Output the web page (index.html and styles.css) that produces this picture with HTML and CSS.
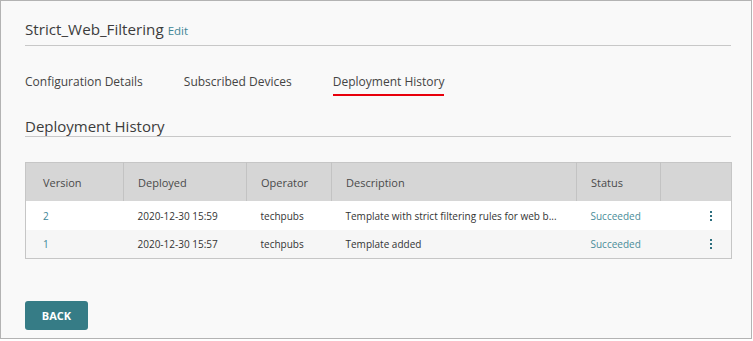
FILE: index.html
```html
<!DOCTYPE html>
<html lang="en">
<head>
    <meta charset="UTF-8">
    <meta name="viewport" content="width=device-width, initial-scale=1.0">
    <title>Strict_Web_Filtering</title>
    <link rel="stylesheet" href="styles.css">
</head>
<body>
    <div class="frame">
        <div class="title-bar">
            <span class="title">Strict_Web_Filtering</span>
            <a class="edit" href="#">Edit</a>
        </div>

        <div class="tabs">
            <div class="tab">Configuration Details</div>
            <div class="tab">Subscribed Devices</div>
            <div class="tab active">Deployment History</div>
        </div>

        <h2 class="section-title">Deployment History</h2>

        <table class="history">
            <colgroup>
                <col style="width: 98px">
                <col style="width: 123px">
                <col style="width: 85px">
                <col style="width: 245px">
                <col style="width: 84px">
                <col>
            </colgroup>
            <thead>
                <tr>
                    <th>Version</th>
                    <th>Deployed</th>
                    <th>Operator</th>
                    <th>Description</th>
                    <th>Status</th>
                    <th></th>
                </tr>
            </thead>
            <tbody>
                <tr>
                    <td><a class="link" href="#">2</a></td>
                    <td>2020-12-30 15:59</td>
                    <td>techpubs</td>
                    <td class="desc">Template with strict filtering rules for web b...</td>
                    <td class="status">Succeeded</td>
                    <td class="menu"><span class="kebab"><i></i><i></i><i></i></span></td>
                </tr>
                <tr>
                    <td><a class="link" href="#">1</a></td>
                    <td>2020-12-30 15:57</td>
                    <td>techpubs</td>
                    <td class="desc">Template added</td>
                    <td class="status">Succeeded</td>
                    <td class="menu"><span class="kebab"><i></i><i></i><i></i></span></td>
                </tr>
            </tbody>
        </table>

        <button class="back">BACK</button>
    </div>
</body>
</html>
```

FILE: styles.css
```css
body { margin: 0; font-family: "Open Sans", "Liberation Sans", sans-serif; color: #444; background: #fff; }
.frame {
    box-sizing: border-box;
    width: 752px;
    height: 339px;
    border: 1px solid #b3b3b3;
    background: #f9f9f9;
    padding: 0 20px 0 24px;
}
.title-bar {
    display: flex;
    align-items: baseline;
    height: 45px;
    box-sizing: border-box;
    padding-top: 17px;
    border-bottom: 1px solid #c8c8c8;
    line-height: 22px;
}
.title { font-size: 15.2px; color: #3c3c3c; }
.edit { font-size: 11.5px; color: #3f8696; text-decoration: none; margin-left: 4px; }
.tabs { display: flex; gap: 41px; margin-top: 27px; }
.tab {
    font-size: 12px;
    line-height: 18px;
    padding-bottom: 3px;
    border-bottom: 2px solid transparent;
    color: #444;
}
.tab.active { border-bottom-color: #e8000b; }
.section-title {
    margin: 20px 0 0;
    font-size: 15px;
    font-weight: normal;
    line-height: 20px;
    color: #3c3c3c;
    border-bottom: 1px solid #c8c8c8;
}
.history {
    margin-top: 25px;
    width: 707px;
    border-collapse: collapse;
    table-layout: fixed;
    border: 1px solid #c6c6c6;
    font-size: 10px;
}
.history th {
    height: 38px;
    background: #d6d6d6;
    font-weight: normal;
    text-align: left;
    padding: 0 14px;
    color: #4a4a4a;
    border-left: 1px solid #c3c3c3;
    font-size: 11px;
}
.history th:first-child, .history td:first-child { padding-left: 17px; border-left: none; }
.history td { height: 29px; padding: 0 14px; color: #333; white-space: nowrap; overflow: hidden; }
.history tbody tr:nth-child(2) td { height: 28px; background: #f6f6f6; }
.history tbody tr:first-child td { background: #fff; }
.history .link { color: #3f8696; text-decoration: none; }
.history .status { color: #4a8c99; }
.history .menu { padding: 0 0 0 49px; }
.kebab { display: flex; flex-direction: column; gap: 2px; width: 2px; }
.kebab i { display: block; width: 2px; height: 2px; background: #2d6f7f; }
.back {
    display: block;
    margin-top: 42px;
    width: 63px;
    height: 29px;
    border: none;
    border-radius: 3px;
    background: #367c86;
    color: #fff;
    font-family: "Open Sans", "Liberation Sans", sans-serif;
    font-weight: bold;
    font-size: 11px;
    cursor: pointer;
}
```
